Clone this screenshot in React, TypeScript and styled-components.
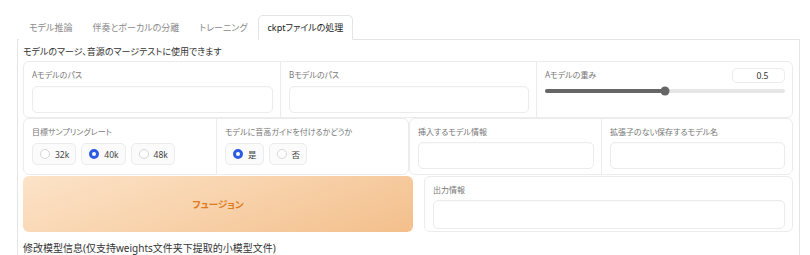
import React from 'react';
import styled, { createGlobalStyle } from 'styled-components';

const GlobalStyle = createGlobalStyle`
  body {
    margin: 0;
    background: #fff;
    font-family: 'Noto Sans', 'Noto Sans CJK JP', sans-serif;
    font-feature-settings: 'palt';
    overflow: hidden;
  }
`;

const Page = styled.div`
  width: 810px;
  height: 255px;
  overflow: hidden;
  padding-top: 15px;
  box-sizing: border-box;
`;

const TabBar = styled.div`
  display: flex;
  margin-left: 19px;
  position: relative;
  z-index: 1;
`;

const Tab = styled.div<{ $active?: boolean }>`
  height: 25px;
  box-sizing: border-box;
  padding: 0 9px;
  display: flex;
  align-items: center;
  font-size: 9px;
  color: ${(p) => (p.$active ? '#222' : '#8a8a8a')};
  background: #fff;
  border: 1px solid ${(p) => (p.$active ? '#e4e4e4' : 'transparent')};
  border-bottom: 1px solid ${(p) => (p.$active ? '#fff' : 'transparent')};
  border-radius: 5px 5px 0 0;
  margin-bottom: -1px;
`;

const Panel = styled.div`
  margin-left: 17px;
  width: 783px;
  height: 230px;
  box-sizing: border-box;
  border: 1px solid #e4e4e4;
  border-bottom: none;
  padding: 5px 6px 0 5px;
`;

const Title = styled.div`
  font-size: 9px;
  color: #333;
  line-height: 14px;
  margin-bottom: 2px;
`;

const Block = styled.div<{ $cols: string }>`
  display: grid;
  grid-template-columns: ${(p) => p.$cols};
  background: #fff;
  border: 1px solid #ececec;
  border-radius: 6px;
  box-sizing: border-box;
  height: 57px;
`;

const Cell = styled.div`
  padding: 7px 7px 0 8px;
  border-left: 1px solid #ececec;
  &:first-child {
    border-left: none;
  }
  display: flex;
  flex-direction: column;
  min-width: 0;
`;

const Label = styled.div`
  font-size: 8px;
  color: #777;
  line-height: 12px;
  height: 12px;
`;

const TextBox = styled.div<{ $h?: number }>`
  margin-top: ${(p) => p.$h ?? 5}px;
  height: 25px;
  border: 1px solid #ececec;
  border-radius: 5px;
  background: #fff;
  box-shadow: inset 0 1px 1px rgba(0, 0, 0, 0.02);
`;

const Row = styled.div<{ $cols?: string; $gap?: number }>`
  display: grid;
  grid-template-columns: ${(p) => p.$cols ?? '1fr'};
  gap: ${(p) => p.$gap ?? 0}px;
`;

const SliderHead = styled.div`
  display: flex;
  justify-content: space-between;
  align-items: center;
  height: 14px;
  margin-top: -1px;
`;

const NumberBox = styled.div`
  width: 53px;
  height: 15px;
  box-sizing: border-box;
  border: 1px solid #ececec;
  border-radius: 5px;
  font-size: 8.5px;
  color: #333;
  text-align: center;
  line-height: 13px;
  padding-left: 8px;
`;

const Track = styled.div`
  position: relative;
  margin-top: 7px;
  height: 4px;
  border-radius: 2px;
  background: #e6e6e6;
`;

const TrackFill = styled.div`
  height: 100%;
  border-radius: 2px;
  background: #666;
`;

const Thumb = styled.div`
  position: absolute;
  top: 50%;
  width: 9px;
  height: 9px;
  border-radius: 50%;
  background: #666;
  transform: translate(-50%, -50%);
`;

const Options = styled.div`
  display: flex;
  gap: 5px;
  margin-top: 5px;
`;

const Pill = styled.div`
  height: 22px;
  box-sizing: border-box;
  border: 1px solid #ececec;
  border-radius: 5px;
  background: #fbfbfb;
  display: flex;
  align-items: center;
  gap: 5px;
  padding: 0 6px 0 7px;
  font-size: 8.5px;
  color: #444;
`;

const Dot = styled.span<{ $on?: boolean }>`
  width: 10px;
  height: 10px;
  box-sizing: border-box;
  border-radius: 50%;
  background: #fff;
  border: ${(p) => (p.$on ? '3px solid #2d5be3' : '1px solid #d6d6d6')};
`;

const FuseButton = styled.div`
  height: 56px;
  border-radius: 6px;
  background: linear-gradient(160deg, #fce3c8 0%, #f8d2ab 50%, #f3bf8b 100%);
  display: flex;
  align-items: center;
  justify-content: center;
  font-size: 9.5px;
  font-weight: 700;
  color: #e07a1f;
`;

const OutBlock = styled.div`
  height: 56px;
  box-sizing: border-box;
  border: 1px solid #ececec;
  border-radius: 6px;
  padding: 7px 7px 0 8px;
`;

const Footer = styled.div`
  margin-top: 9px;
  font-size: 10px;
  color: #333;
  font-family: 'Noto Sans', 'Noto Sans CJK SC', sans-serif;
  line-height: 14px;
`;

const Radio: React.FC<{ label: string; on?: boolean }> = ({ label, on }) => (
  <Pill>
    <Dot $on={on} />
    {label}
  </Pill>
);

const App: React.FC = () => {
  const weight = 0.5;
  return (
    <Page>
      <GlobalStyle />
      <TabBar>
        <Tab>モデル推論</Tab>
        <Tab>伴奏とボーカルの分離</Tab>
        <Tab>トレーニング</Tab>
        <Tab $active>ckptファイルの処理</Tab>
      </TabBar>
      <Panel>
        <Title>モデルのマージ、音源のマージテストに使用できます</Title>
        <Block $cols="1fr 1fr 1fr">
          <Cell>
            <Label>Aモデルのパス</Label>
            <TextBox />
          </Cell>
          <Cell>
            <Label>Bモデルのパス</Label>
            <TextBox />
          </Cell>
          <Cell>
            <SliderHead>
              <Label>Aモデルの重み</Label>
              <NumberBox>{weight}</NumberBox>
            </SliderHead>
            <Track>
              <TrackFill style={{ width: `${weight * 100}%` }} />
              <Thumb style={{ left: `${weight * 100}%` }} />
            </Track>
          </Cell>
        </Block>
        <Row $cols="386px 1fr">
          <Block $cols="1fr 1fr">
            <Cell>
              <Label>目標サンプリングレート</Label>
              <Options>
                <Radio label="32k" />
                <Radio label="40k" on />
                <Radio label="48k" />
              </Options>
            </Cell>
            <Cell>
              <Label>モデルに音高ガイドを付けるかどうか</Label>
              <Options>
                <Radio label="是" on />
                <Radio label="否" />
              </Options>
            </Cell>
          </Block>
          <Block $cols="1fr 1fr">
            <Cell>
              <Label>挿入するモデル情報</Label>
              <TextBox $h={4} />
            </Cell>
            <Cell>
              <Label>拡張子のない保存するモデル名</Label>
              <TextBox $h={4} />
            </Cell>
          </Block>
        </Row>
        <Row $cols="390px 1fr" $gap={11} style={{ marginTop: 1 }}>
          <FuseButton>フュージョン</FuseButton>
          <OutBlock>
            <Label>出力情報</Label>
            <TextBox $h={4} style={{ height: 27 }} />
          </OutBlock>
        </Row>
        <Footer>修改模型信息(仅支持weights文件夹下提取的小模型文件)</Footer>
      </Panel>
    </Page>
  );
};

export default App;
